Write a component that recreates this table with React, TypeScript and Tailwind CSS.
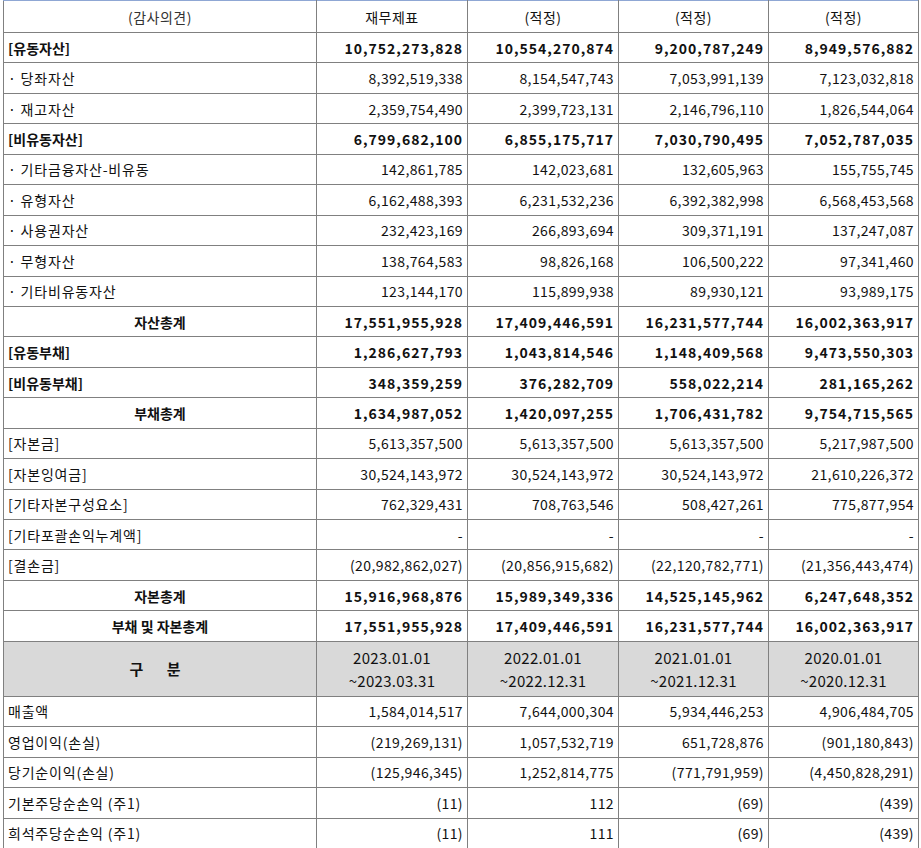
type Row = {
  label: string;
  values: string[];
  bold?: boolean;
  center?: boolean;
};

const balanceRows: Row[] = [
  { label: '[유동자산]', values: ['10,752,273,828', '10,554,270,874', '9,200,787,249', '8,949,576,882'], bold: true },
  { label: '· 당좌자산', values: ['8,392,519,338', '8,154,547,743', '7,053,991,139', '7,123,032,818'] },
  { label: '· 재고자산', values: ['2,359,754,490', '2,399,723,131', '2,146,796,110', '1,826,544,064'] },
  { label: '[비유동자산]', values: ['6,799,682,100', '6,855,175,717', '7,030,790,495', '7,052,787,035'], bold: true },
  { label: '· 기타금융자산-비유동', values: ['142,861,785', '142,023,681', '132,605,963', '155,755,745'] },
  { label: '· 유형자산', values: ['6,162,488,393', '6,231,532,236', '6,392,382,998', '6,568,453,568'] },
  { label: '· 사용권자산', values: ['232,423,169', '266,893,694', '309,371,191', '137,247,087'] },
  { label: '· 무형자산', values: ['138,764,583', '98,826,168', '106,500,222', '97,341,460'] },
  { label: '· 기타비유동자산', values: ['123,144,170', '115,899,938', '89,930,121', '93,989,175'] },
  { label: '자산총계', values: ['17,551,955,928', '17,409,446,591', '16,231,577,744', '16,002,363,917'], bold: true, center: true },
  { label: '[유동부채]', values: ['1,286,627,793', '1,043,814,546', '1,148,409,568', '9,473,550,303'], bold: true },
  { label: '[비유동부채]', values: ['348,359,259', '376,282,709', '558,022,214', '281,165,262'], bold: true },
  { label: '부채총계', values: ['1,634,987,052', '1,420,097,255', '1,706,431,782', '9,754,715,565'], bold: true, center: true },
  { label: '[자본금]', values: ['5,613,357,500', '5,613,357,500', '5,613,357,500', '5,217,987,500'] },
  { label: '[자본잉여금]', values: ['30,524,143,972', '30,524,143,972', '30,524,143,972', '21,610,226,372'] },
  { label: '[기타자본구성요소]', values: ['762,329,431', '708,763,546', '508,427,261', '775,877,954'] },
  { label: '[기타포괄손익누계액]', values: ['-', '-', '-', '-'] },
  { label: '[결손금]', values: ['(20,982,862,027)', '(20,856,915,682)', '(22,120,782,771)', '(21,356,443,474)'] },
  { label: '자본총계', values: ['15,916,968,876', '15,989,349,336', '14,525,145,962', '6,247,648,352'], bold: true, center: true },
  { label: '부채 및 자본총계', values: ['17,551,955,928', '17,409,446,591', '16,231,577,744', '16,002,363,917'], bold: true, center: true },
];

const periods = [
  ['2023.01.01', '~2023.03.31'],
  ['2022.01.01', '~2022.12.31'],
  ['2021.01.01', '~2021.12.31'],
  ['2020.01.01', '~2020.12.31'],
];

const incomeRows: Row[] = [
  { label: '매출액', values: ['1,584,014,517', '7,644,000,304', '5,934,446,253', '4,906,484,705'] },
  { label: '영업이익(손실)', values: ['(219,269,131)', '1,057,532,719', '651,728,876', '(901,180,843)'] },
  { label: '당기순이익(손실)', values: ['(125,946,345)', '1,252,814,775', '(771,791,959)', '(4,450,828,291)'] },
  { label: '기본주당순손익 (주1)', values: ['(11)', '112', '(69)', '(439)'] },
  { label: '희석주당순손익 (주1)', values: ['(11)', '111', '(69)', '(439)'] },
];

const cell = 'border border-[#808080] px-[4px] whitespace-nowrap';
const topCell = `${cell} text-center tracking-[0.5px] border-t-[#8fa7d4]`;

function DataRow({ row }: { row: Row }) {
  const weight = row.bold ? 'font-bold tracking-[1px]' : 'tracking-[0.4px]';
  return (
    <tr className="h-[30.45px]">
      <td
        className={`${cell} ${row.center ? 'text-center' : 'text-left'} ${
          row.bold ? 'font-bold' : 'tracking-[0.8px]'
        }`}
      >
        {row.label}
      </td>
      {row.values.map((v, i) => (
        <td key={i} className={`${cell} text-right ${weight}`}>
          {v}
        </td>
      ))}
    </tr>
  );
}

export default function App() {
  return (
    <div className="bg-white pl-[3px]">
      <table
        className="border-collapse table-fixed w-[915px] text-[14px] leading-[18px] text-[#111]"
        style={{ fontFamily: '"Noto Sans CJK KR", "Noto Sans", sans-serif' }}
      >
        <colgroup>
          <col className="w-[313px]" />
          <col className="w-[151px]" />
          <col className="w-[151px]" />
          <col className="w-[150px]" />
          <col className="w-[150px]" />
        </colgroup>
        <tbody className="border-l border-b border-black">
          <tr className="h-[32px] border-t border-t-[#8fa7d4]">
            <td className={`${topCell} text-[#333]`}>(감사의견)</td>
            <td className={topCell}>재무제표</td>
            <td className={topCell}>(적정)</td>
            <td className={topCell}>(적정)</td>
            <td className={topCell}>(적정)</td>
          </tr>
          {balanceRows.map((r) => (
            <DataRow key={r.label} row={r} />
          ))}
          <tr className="h-[55px] bg-[#d9d9d9]">
            <td className={`${cell} text-center text-[15px] font-bold tracking-[10px]`}>구 분</td>
            {periods.map((p) => (
              <td key={p[0]} className={`${cell} text-center text-[15px] leading-[23px] tracking-[0.3px]`}>
                <div>{p[0]}</div>
                <div>{p[1]}</div>
              </td>
            ))}
          </tr>
          {incomeRows.map((r) => (
            <DataRow key={r.label} row={r} />
          ))}
        </tbody>
      </table>
    </div>
  );
}
